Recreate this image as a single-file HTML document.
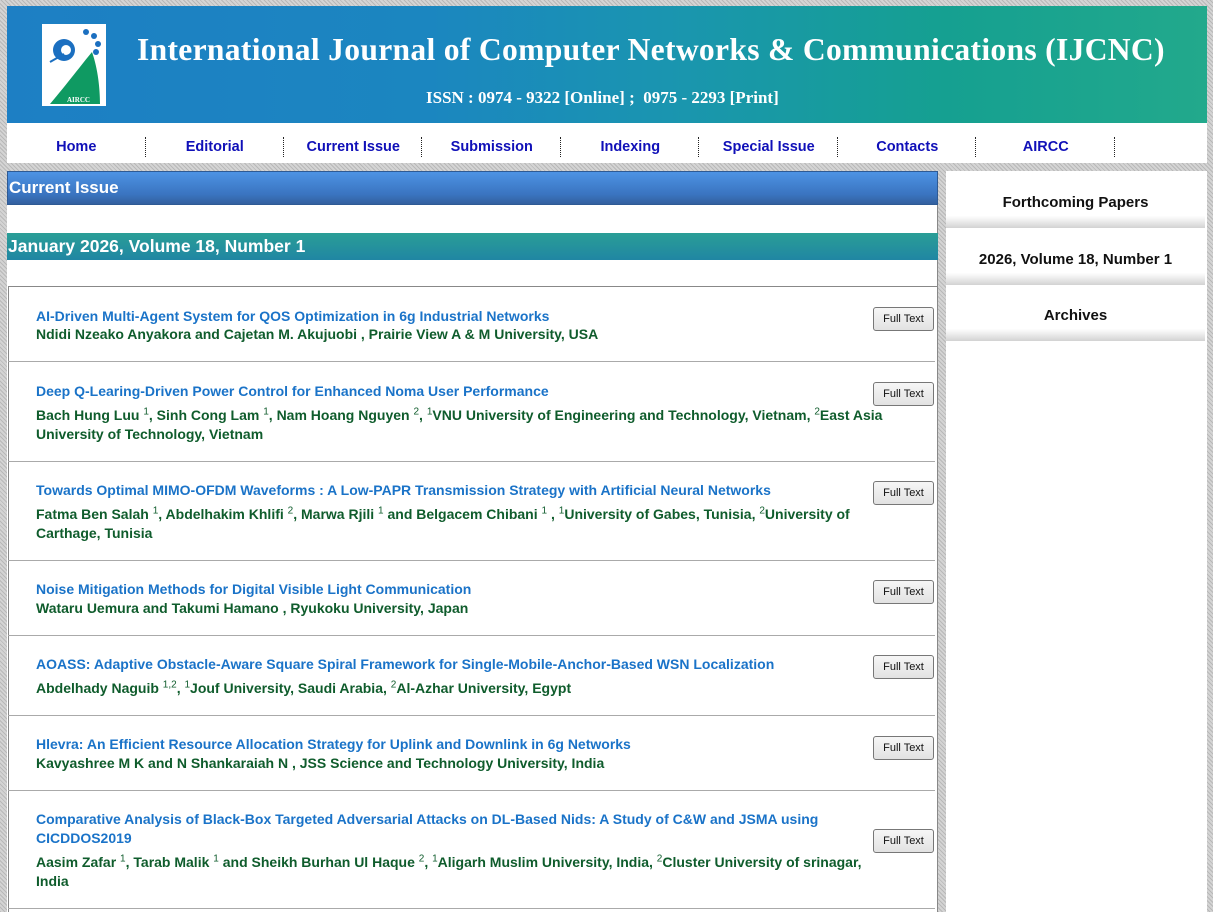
<!DOCTYPE html>
<html><head><meta charset="utf-8"><style>
*{margin:0;padding:0;box-sizing:border-box}
body{width:1213px;height:912px;overflow:hidden;position:relative;font-family:"Liberation Sans",sans-serif;
background:repeating-linear-gradient(45deg,#b8b8b8 0,#b8b8b8 1px,#d4d4d4 1px,#d4d4d4 3px);}
.abs{position:absolute}
#hdr{left:7px;top:6px;width:1200px;height:117px;background:linear-gradient(90deg,#1d7fc4 0%,#1b86c0 35%,#1a95b0 55%,#15a091 78%,#22a98c 100%)}
#nav{left:7px;top:123px;width:1200px;height:40px;background:#fff}
.ni{position:absolute;top:0;height:40px;width:138.5px;text-align:center;line-height:48px;font-weight:bold;font-size:14.5px;color:#1010b8}
.sep{position:absolute;top:14px;height:20px;border-left:1px dotted #222}
#left{left:7px;top:171px;width:931px;height:741px;background:#fff;border-right:1px solid #888}
#right{left:946px;top:171px;width:261px;height:741px;background:#fff}
.bar1{left:7px;top:171px;width:931px;height:34px;background:linear-gradient(#4d93e4,#3a74c0 70%,#33609e);color:#fff;font-weight:bold;font-size:17px;line-height:32px;padding-left:1px;border:1px solid #2e5a94}
.bar2{left:7px;top:233px;width:931px;height:27px;background:linear-gradient(#2a9e96,#2086a3);color:#fff;font-weight:bold;font-size:17.5px;line-height:27px;padding-left:1px}
#box{left:8px;top:286px;width:930px;height:626px;border:1px solid #888;border-bottom:none;background:#fff}
.hr{position:absolute;left:8px;width:927px;height:1px;background:#aaa}
.t{position:absolute;left:36px;white-space:nowrap;font-weight:bold;font-size:14px;line-height:18px}
.ti{color:#1a73c8}
.au{color:#0f5c2c}
sup{font-size:10px;line-height:0;color:#0f5c2c;font-weight:normal}
.btn{position:absolute;left:873px;width:61px;height:24px;border:1px solid #777;border-radius:3px;background:linear-gradient(#f6f6f6,#e2e2e2);font-size:11px;text-align:center;line-height:22px;color:#111}
.side{position:absolute;left:946px;width:259px;height:56px;text-align:center;font-weight:bold;font-size:15px;color:#111;
background:linear-gradient(#fff 0,#fff 78%,#ececec 88%,#d2d2d2 100%);}
</style></head><body>
<div id="hdr" class="abs">
 <svg class="abs" style="left:35px;top:18px" width="64" height="82" viewBox="0 0 64 82">
  <rect width="64" height="82" fill="#fff"/>
  <path d="M8 80 C25 60 40 40 50 28 C56 45 58 65 58 80 Z" fill="#0f9a62"/>
  <circle cx="22" cy="26" r="11" fill="#1b6fc0"/><circle cx="24" cy="26" r="5" fill="#fff"/>
  <path d="M8 38 L22 30" stroke="#1b6fc0" stroke-width="2"/>
  <circle cx="44" cy="8" r="3" fill="#1b6fc0"/><circle cx="52" cy="12" r="3" fill="#1b6fc0"/><circle cx="56" cy="20" r="3" fill="#1b6fc0"/><circle cx="54" cy="28" r="3" fill="#1b6fc0"/>
  <text x="25" y="78" font-size="7" font-weight="bold" fill="#fff" font-family="Liberation Serif,serif">AIRCC</text>
 </svg>
 <div class="abs" style="left:130px;top:26px;color:#fff;font-family:'Liberation Serif',serif;font-weight:bold;font-size:31.6px;white-space:nowrap;letter-spacing:0.3px">International Journal of Computer Networks &amp; Communications (IJCNC)</div>
 <div class="abs" style="left:419px;top:82px;color:#fff;font-family:'Liberation Serif',serif;font-weight:bold;font-size:17px;white-space:nowrap">ISSN : 0974 - 9322 [Online] ;&nbsp; 0975 - 2293 [Print]</div>
</div>
<div id="nav" class="abs">
 <div class="ni" style="left:0">Home</div><div class="ni" style="left:138.5px">Editorial</div><div class="ni" style="left:277px">Current Issue</div><div class="ni" style="left:415.5px">Submission</div><div class="ni" style="left:554px">Indexing</div><div class="ni" style="left:692.5px">Special Issue</div><div class="ni" style="left:831px">Contacts</div><div class="ni" style="left:969.5px">AIRCC</div>
 <div class="sep" style="left:138px"></div><div class="sep" style="left:276px"></div><div class="sep" style="left:414px"></div><div class="sep" style="left:553px"></div><div class="sep" style="left:691px"></div><div class="sep" style="left:830px"></div><div class="sep" style="left:968px"></div><div class="sep" style="left:1107px"></div>
</div>
<div id="left" class="abs"></div>
<div id="right" class="abs"></div>
<div class="abs bar1">Current Issue</div>
<div class="abs bar2">January 2026, Volume 18, Number 1</div>
<div id="box" class="abs"></div>
<div class="side" style="top:172px;line-height:62px">Forthcoming Papers</div>
<div class="side" style="top:229px;line-height:62px">2026, Volume 18, Number 1</div>
<div class="side" style="top:285px;line-height:62px">Archives</div>

<div class="t ti" style="top:307px">AI-Driven Multi-Agent System for QOS Optimization in 6g Industrial Networks</div>
<div class="t au" style="top:325px">Ndidi Nzeako Anyakora and Cajetan M. Akujuobi , Prairie View A &amp; M University, USA</div>
<div class="btn" style="top:307px">Full Text</div>
<div class="hr" style="top:361px"></div>

<div class="t ti" style="top:382px">Deep Q-Learing-Driven Power Control for Enhanced Noma User Performance</div>
<div class="t au" style="top:406px">Bach Hung Luu <sup>1</sup>, Sinh Cong Lam <sup>1</sup>, Nam Hoang Nguyen <sup>2</sup>, <sup>1</sup>VNU University of Engineering and Technology, Vietnam, <sup>2</sup>East Asia</div>
<div class="t au" style="top:425px">University of Technology, Vietnam</div>
<div class="btn" style="top:382px">Full Text</div>
<div class="hr" style="top:461px"></div>

<div class="t ti" style="top:481px">Towards Optimal MIMO-OFDM Waveforms : A Low-PAPR Transmission Strategy with Artificial Neural Networks</div>
<div class="t au" style="top:505px">Fatma Ben Salah <sup>1</sup>, Abdelhakim Khlifi <sup>2</sup>, Marwa Rjili <sup>1</sup> and Belgacem Chibani <sup>1</sup> , <sup>1</sup>University of Gabes, Tunisia, <sup>2</sup>University of</div>
<div class="t au" style="top:524px">Carthage, Tunisia</div>
<div class="btn" style="top:481px">Full Text</div>
<div class="hr" style="top:560px"></div>

<div class="t ti" style="top:580px">Noise Mitigation Methods for Digital Visible Light Communication</div>
<div class="t au" style="top:599px">Wataru Uemura and Takumi Hamano , Ryukoku University, Japan</div>
<div class="btn" style="top:580px">Full Text</div>
<div class="hr" style="top:635px"></div>

<div class="t ti" style="top:655px">AOASS: Adaptive Obstacle-Aware Square Spiral Framework for Single-Mobile-Anchor-Based WSN Localization</div>
<div class="t au" style="top:679px">Abdelhady Naguib <sup>1,2</sup>, <sup>1</sup>Jouf University, Saudi Arabia, <sup>2</sup>Al-Azhar University, Egypt</div>
<div class="btn" style="top:655px">Full Text</div>
<div class="hr" style="top:715px"></div>

<div class="t ti" style="top:735px">Hlevra: An Efficient Resource Allocation Strategy for Uplink and Downlink in 6g Networks</div>
<div class="t au" style="top:754px">Kavyashree M K and N Shankaraiah N , JSS Science and Technology University, India</div>
<div class="btn" style="top:736px">Full Text</div>
<div class="hr" style="top:790px"></div>

<div class="t ti" style="top:810px">Comparative Analysis of Black-Box Targeted Adversarial Attacks on DL-Based Nids: A Study of C&amp;W and JSMA using</div>
<div class="t ti" style="top:829px">CICDDOS2019</div>
<div class="t au" style="top:853px">Aasim Zafar <sup>1</sup>, Tarab Malik <sup>1</sup> and Sheikh Burhan Ul Haque <sup>2</sup>, <sup>1</sup>Aligarh Muslim University, India, <sup>2</sup>Cluster University of srinagar,</div>
<div class="t au" style="top:872px">India</div>
<div class="btn" style="top:829px">Full Text</div>
<div class="hr" style="top:908px"></div>
</body></html>
